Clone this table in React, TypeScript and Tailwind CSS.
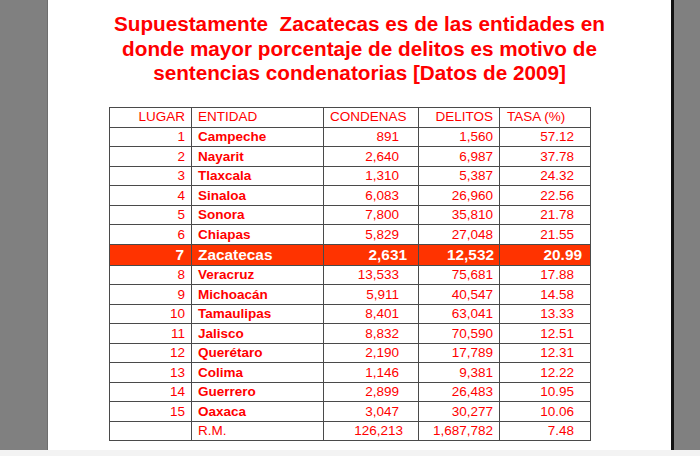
type Row = {
  lugar: string;
  entidad: string;
  condenas: string;
  delitos: string;
  tasa: string;
};

const rows: Row[] = [
  { lugar: "1", entidad: "Campeche", condenas: "891", delitos: "1,560", tasa: "57.12" },
  { lugar: "2", entidad: "Nayarit", condenas: "2,640", delitos: "6,987", tasa: "37.78" },
  { lugar: "3", entidad: "Tlaxcala", condenas: "1,310", delitos: "5,387", tasa: "24.32" },
  { lugar: "4", entidad: "Sinaloa", condenas: "6,083", delitos: "26,960", tasa: "22.56" },
  { lugar: "5", entidad: "Sonora", condenas: "7,800", delitos: "35,810", tasa: "21.78" },
  { lugar: "6", entidad: "Chiapas", condenas: "5,829", delitos: "27,048", tasa: "21.55" },
  { lugar: "7", entidad: "Zacatecas", condenas: "2,631", delitos: "12,532", tasa: "20.99" },
  { lugar: "8", entidad: "Veracruz", condenas: "13,533", delitos: "75,681", tasa: "17.88" },
  { lugar: "9", entidad: "Michoacán", condenas: "5,911", delitos: "40,547", tasa: "14.58" },
  { lugar: "10", entidad: "Tamaulipas", condenas: "8,401", delitos: "63,041", tasa: "13.33" },
  { lugar: "11", entidad: "Jalisco", condenas: "8,832", delitos: "70,590", tasa: "12.51" },
  { lugar: "12", entidad: "Querétaro", condenas: "2,190", delitos: "17,789", tasa: "12.31" },
  { lugar: "13", entidad: "Colima", condenas: "1,146", delitos: "9,381", tasa: "12.22" },
  { lugar: "14", entidad: "Guerrero", condenas: "2,899", delitos: "26,483", tasa: "10.95" },
  { lugar: "15", entidad: "Oaxaca", condenas: "3,047", delitos: "30,277", tasa: "10.06" },
];

const cell = "border border-[#4a4a4a] p-0 leading-none";

export default function App() {
  return (
    <div
      className="w-[700px] h-[456px] flex flex-col bg-white overflow-hidden"
      style={{ fontFamily: '"Liberation Sans", Arial, sans-serif' }}
    >
      <div className="flex h-[450px]">
        <div className="w-[48px] bg-[#808080] border-r border-[#6e6e6e]" />
        <div className="flex-1 bg-white">
          <h1 className="pt-[12px] text-center text-[20.7px] leading-[24.5px] font-bold text-[#ff0000] whitespace-pre">
            {"Supuestamente  Zacatecas es de las entidades en\ndonde mayor porcentaje de delitos es motivo de\nsentencias condenatorias [Datos de 2009]"}
          </h1>
          <table className="mt-[21px] ml-[61px] border-collapse border border-[#3a3a3a] text-[13.5px] text-[#ff0000]">
            <thead>
              <tr className="h-[20px]">
                <th className={`${cell} w-[82px] text-right pr-[6px] font-normal`}>LUGAR</th>
                <th className={`${cell} w-[132px] text-left pl-[6px] font-normal`}>ENTIDAD</th>
                <th className={`${cell} w-[95px] text-left pl-[6px] font-normal`}>CONDENAS</th>
                <th className={`${cell} w-[81px] text-right pr-[6px] font-normal`}>DELITOS</th>
                <th className={`${cell} w-[91px] text-left pl-[7px] font-normal`}>TASA (%)</th>
              </tr>
            </thead>
            <tbody>
              {rows.map((r) =>
                r.lugar === "7" ? (
                  <tr key={r.lugar} className="h-[21px] bg-[#ff3300] text-white font-bold text-[15.4px]">
                    <td className={`${cell} text-right pr-[7px]`}>{r.lugar}</td>
                    <td className={`${cell} text-left pl-[6px]`}>{r.entidad}</td>
                    <td className={`${cell} text-right pr-[11px]`}>{r.condenas}</td>
                    <td className={`${cell} text-right pr-[5px]`}>{r.delitos}</td>
                    <td className={`${cell} text-right pr-[8px]`}>{r.tasa}</td>
                  </tr>
                ) : (
                  <tr key={r.lugar} className="h-[19.5px]">
                    <td className={`${cell} text-right pr-[6px]`}>{r.lugar}</td>
                    <td className={`${cell} text-left pl-[6px] font-bold`}>{r.entidad}</td>
                    <td className={`${cell} text-right pr-[19px]`}>{r.condenas}</td>
                    <td className={`${cell} text-right pr-[6px]`}>{r.delitos}</td>
                    <td className={`${cell} text-right pr-[16px]`}>{r.tasa}</td>
                  </tr>
                )
              )}
              <tr className="h-[19.5px]">
                <td className={cell}></td>
                <td className={`${cell} text-left pl-[6px]`}>R.M.</td>
                <td className={`${cell} text-right pr-[15px]`}>126,213</td>
                <td className={`${cell} text-right pr-[6px]`}>1,687,782</td>
                <td className={`${cell} text-right pr-[16px]`}>7.48</td>
              </tr>
            </tbody>
          </table>
        </div>
        <div className="w-[3px] bg-[#111111]" />
        <div className="w-[26px] bg-[#808080]" />
      </div>
      <div className="h-[6px] bg-[#f3f3f3]" />
    </div>
  );
}
